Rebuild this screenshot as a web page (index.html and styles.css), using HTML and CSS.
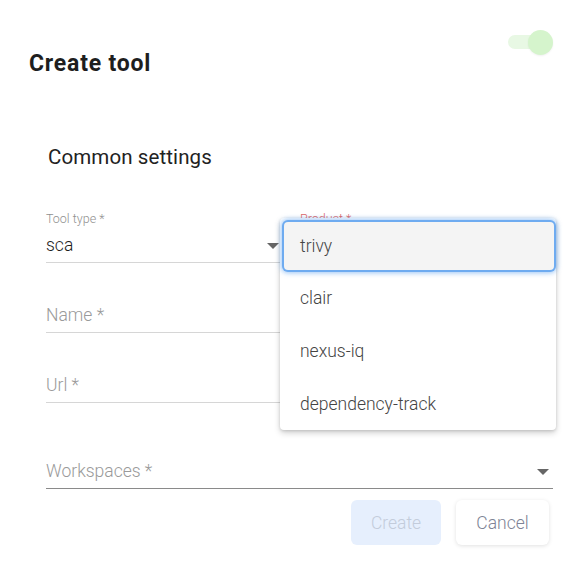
FILE: index.html
```html
<!DOCTYPE html>
<html lang="en">
<head>
<meta charset="utf-8">
<title>Create tool</title>
<link rel="stylesheet" href="styles.css">
</head>
<body>
<div class="dialog">
  <header class="header">
    <h1 class="title">Create tool</h1>
    <div class="toggle"><span class="toggle-track"></span><span class="toggle-knob"></span></div>
  </header>
  <h2 class="section">Common settings</h2>
  <form class="form">
    <div class="row">
      <div class="field">
        <label class="label">Tool type *</label>
        <div class="input select"><span class="value">sca</span><span class="arrow"></span></div>
      </div>
      <div class="field product">
        <label class="label error">Product *</label>
        <div class="input select"><span class="value"></span><span class="arrow"></span></div>
        <ul class="menu">
          <li class="option active">trivy</li>
          <li class="option">clair</li>
          <li class="option">nexus-iq</li>
          <li class="option">dependency-track</li>
        </ul>
      </div>
    </div>
    <div class="field">
      <label class="label"></label>
      <div class="input"><span class="placeholder">Name *</span></div>
    </div>
    <div class="field">
      <label class="label"></label>
      <div class="input"><span class="placeholder">Url *</span></div>
    </div>
    <div class="field wide">
      <label class="label"></label>
      <div class="input select dark"><span class="placeholder">Workspaces *</span><span class="arrow"></span></div>
    </div>
    <div class="actions">
      <button type="button" class="btn btn-primary" disabled>Create</button>
      <button type="button" class="btn btn-secondary">Cancel</button>
    </div>
  </form>
</div>
</body>
</html>
```

FILE: styles.css
```css
* { box-sizing: border-box; }
html, body { margin: 0; padding: 0; background: #fff; }
body { font-family: Roboto, "Noto Sans", Arial, sans-serif; color: #222; }

.dialog { width: 581px; height: 561px; position: relative; overflow: hidden; }

.header {
  display: flex;
  justify-content: space-between;
  align-items: flex-start;
  padding: 30px 28px 0 29px;
  height: 120px;
}
.title {
  margin: 21px 0 0 0;
  font-size: 23px;
  font-weight: 700;
  line-height: 26px;
  color: #1e1e1e;
  letter-spacing: 0.8px;
}
.toggle { position: relative; width: 45px; height: 26px; }
.toggle-track {
  position: absolute; left: 0; top: 5px;
  width: 32px; height: 14px; border-radius: 7px;
  background: #e8f8e4;
}
.toggle-knob {
  position: absolute; left: 20px; top: 0;
  width: 25px; height: 25px; border-radius: 50%;
  background: #d5f4cc;
  box-shadow: 0 1px 2px rgba(0,0,0,0.06);
}

.section {
  margin: 25px 0 0 48px;
  font-size: 20.5px;
  font-weight: 400;
  line-height: 24px;
  color: #222;
  letter-spacing: 0.1px;
}

.form { padding: 43px 28px 0 46px; }

.row { display: grid; grid-template-columns: 237px 253px; column-gap: 17px; }

.field { margin-bottom: 19px; position: relative; }
.field.wide { margin-top: 35px; margin-bottom: 0; }

.label {
  display: block;
  height: 14px;
  font-size: 12.5px;
  font-weight: 300;
  line-height: 14px;
  color: #8f8f8f;
}
.label.error { color: #e06666; }

.input {
  height: 37px;
  border-bottom: 1px solid #d6d6d6;
  display: flex;
  align-items: center;
  justify-content: space-between;
  padding-top: 2px;
}
.input.dark { border-bottom-color: #8a8a8a; }
.value { font-size: 17.5px; font-weight: 300; color: #1e1e1e; }
.placeholder { font-size: 17.5px; font-weight: 300; color: #9a9a9a; }
.arrow {
  width: 0; height: 0;
  border-left: 6px solid transparent;
  border-right: 6px solid transparent;
  border-top: 6px solid #666;
  margin-right: 4px;
  margin-top: 1px;
}

.menu {
  position: absolute;
  left: -20px; top: 6px;
  width: 276px;
  margin: 0; padding: 4px 0 0 0;
  list-style: none;
  background: #fff;
  border-radius: 4px;
  box-shadow: 0 3px 6px rgba(0,0,0,0.18), 0 1px 3px rgba(0,0,0,0.12);
  z-index: 5;
}
.option {
  height: 53px;
  display: flex;
  align-items: center;
  padding-left: 20px;
  font-size: 17.5px;
  font-weight: 300;
  color: #444;
}
.option.active {
  height: 48px;
  margin: 0 2px 1px 4px;
  padding-left: 16px;
  background: #f4f4f4;
  border-radius: 4px;
  box-shadow: 0 0 0 2px #6eabf0, 0 0 5px 3px rgba(90,160,240,0.6);
}

.actions {
  display: flex;
  justify-content: flex-end;
  gap: 15px;
  margin-top: 11px;
  padding-right: 4px;
}
.btn {
  height: 45px;
  border: none;
  border-radius: 6px;
  font-family: Roboto, "Noto Sans", Arial, sans-serif;
  font-size: 17.5px;
  font-weight: 300;
  padding: 0;
}
.btn-primary { width: 90px; background: #e6effd; color: #c3ccdb; }
.btn-secondary {
  width: 93px; background: #fff; color: #7e8395;
  box-shadow: 0 1px 4px rgba(0,0,0,0.12);
}
```
